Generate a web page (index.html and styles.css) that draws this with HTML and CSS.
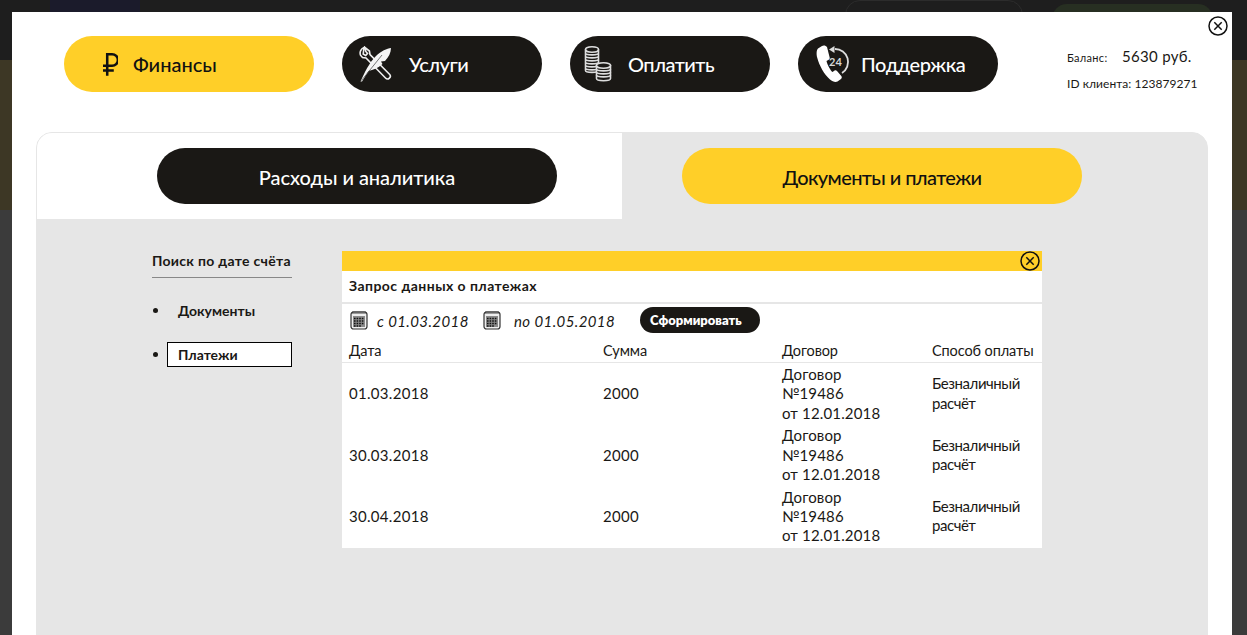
FILE: index.html
```html
<!DOCTYPE html>
<html lang="ru">
<head>
<meta charset="utf-8">
<title>Финансы</title>
<link rel="stylesheet" href="styles.css">
</head>
<body>
<div class="backdrop">
  <div class="bd-top"><span class="bd-logo"></span><span class="bd-outline"></span><span class="bd-green"></span></div>
  <div class="bd-band"></div>
  <div class="bd-rest"></div>
</div>
<main class="modal">
  <button class="modal-close close-icon" aria-label="Закрыть"><svg viewBox="0 0 20 20"><circle cx="10" cy="10" r="9"/><path d="M6.300 6.300l7.400 7.400M13.700 6.300l-7.400 7.400"/></svg></button>
  <header class="top">
    <nav class="nav">
      <a class="pill pill-active pill-wide">
        <svg class="ic ic-rub" viewBox="0 0 16 26"><path d="M4.500 25V2h5.200a6.200 6.200 0 0 1 0 12.400H0M0 19.500h11.500"/></svg>
        <span class="pill-t1">Финансы</span>
      </a>
      <a class="pill">
        <svg class="ic ic-tools" viewBox="0 0 34 36"><path class="wr" d="M5 1.500a6 6 0 0 0-3.500 7.700l2 2.300 3.500.5L26.500 32a2.700 2.700 0 0 0 4-3.800L11 8.500l-.6-3.500L6 1.500l.8 4 1.700 2-1.800 2-2.500-1.500z"/><path class="fe" d="M1.500 35.500 C6 26 10 17 17 10 C22 5 28 2.500 32 2 C32 7 29.500 11 26 15 L22 15.500 L23.500 18 C19 22 14 24 9.500 25 L3 35.500z"/><path class="fl" d="M2.500 34.500 L23 9"/></svg>
        <span class="pill-t2">Услуги</span>
      </a>
      <a class="pill">
        <svg class="ic ic-coins" viewBox="0 0 28 36"><g class="coin"><ellipse cx="8" cy="3.500" rx="6.500" ry="2.700"/><path d="M1.500 3.500v21c0 2.500 13 2.500 13 0V3.500M1.500 7c0 2.500 13 2.500 13 0M1.500 10c0 2.500 13 2.500 13 0M1.500 13c0 2.500 13 2.500 13 0M1.500 16c0 2.500 13 2.500 13 0M1.500 19c0 2.500 13 2.500 13 0M1.500 22c0 2.500 13 2.500 13 0"/></g><g class="coin"><path class="coin-top" d="M12.500 19.500v13c0 3 14 3 14 0V19.500z"/><ellipse class="coin-top" cx="19.500" cy="19.500" rx="7" ry="2.800"/><path d="M12.500 23c0 2.500 14 2.500 14 0M12.500 26c0 2.500 14 2.500 14 0M12.500 29c0 2.500 14 2.500 14 0"/></g></svg>
        <span class="pill-t3">Оплатить</span>
      </a>
      <a class="pill">
        <svg class="ic ic-phone" viewBox="0 0 34 38"><path class="ring" d="M19 4A13 13 0 0 1 26 28"/><path class="ring-tip" d="M13 4.500l5.500-3.500v7z"/><path class="ph" d="M6 1L2 3.500C.5 5 .2 9 1.300 13 3.500 21 8 29 14 34.500c2.500 2.200 5.500 3 7.500 2l3.500-2.500c1-1 1-2 .3-3l-4.300-5c-.8-.8-1.800-.8-2.700-.2l-1.800 1.300c-1.500-.5-5.500-8-6-11l2.200-1.300c.9-.6 1.200-1.500.9-2.500L11 2C10 .5 7.500 0 6 1z"/><text class="ph-num" x="13" y="21">24</text></svg>
        <span class="pill-t4">Поддержка</span>
      </a>
    </nav>
    <div class="account">
      <p class="bal"><span class="bal-l">Баланс:</span><span class="bal-v">5630 руб.</span></p>
      <p class="cid">ID клиента: <span class="cid-v">123879271</span></p>
    </div>
  </header>
  <section class="panel">
    <div class="tabs">
      <div class="tab tab-on"><a class="tab-btn tab-dark">Расходы и аналитика</a></div>
      <div class="tab tab-off"><a class="tab-btn tab-yellow">Документы и платежи</a></div>
    </div>
    <div class="body">
      <aside class="side">
        <h3 class="side-h">Поиск по дате счёта</h3>
        <ul class="side-list">
          <li class="side-item"><span class="side-lnk">Документы</span></li>
          <li class="side-item"><span class="side-lnk side-sel">Платежи</span></li>
        </ul>
      </aside>
      <article class="card">
        <div class="card-bar"><button class="card-close close-icon" aria-label="Закрыть"><svg viewBox="0 0 20 20"><circle cx="10" cy="10" r="9"/><path d="M6.300 6.300l7.400 7.400M13.700 6.300l-7.400 7.400"/></svg></button></div>
        <h2 class="card-title">Запрос данных о платежах</h2>
        <div class="filter">
          <svg class="cal" viewBox="0 0 18 20"><use href="#cal"/></svg>
          <span class="date date-a">с 01.03.2018</span>
          <svg class="cal" viewBox="0 0 18 20"><use href="#cal"/></svg>
          <span class="date date-b">по 01.05.2018</span>
          <a class="form-btn">Сформировать</a>
        </div>
        <table class="tbl">
          <colgroup><col class="c1"><col class="c2"><col class="c3"><col class="c4"></colgroup>
          <thead><tr><th>Дата</th><th>Сумма</th><th>Договор</th><th>Способ оплаты</th></tr></thead>
          <tbody>
            <tr><td>01.03.2018</td><td>2000</td><td class="td-con">Договор<br>№19486<br>от 12.01.2018</td><td class="td-pay">Безналичный<br>расчёт</td></tr>
            <tr><td>30.03.2018</td><td>2000</td><td class="td-con">Договор<br>№19486<br>от 12.01.2018</td><td class="td-pay">Безналичный<br>расчёт</td></tr>
            <tr><td>30.04.2018</td><td>2000</td><td class="td-con">Договор<br>№19486<br>от 12.01.2018</td><td class="td-pay">Безналичный<br>расчёт</td></tr>
          </tbody>
        </table>
      </article>
    </div>
  </section>
</main>
<svg class="defs" width="0" height="0"><defs><g id="cal"><rect x="1" y="2" width="16" height="17" rx="2.500" fill="#eee" stroke="#333" stroke-width="1.200"/><rect x="3" y="6" width="12" height="11" fill="#8a8a8a"/><path d="M3 1v3M5 1v3M7 1v3M9 1v3M11 1v3M13 1v3M15 1v3" stroke="#333" stroke-width=".9"/><path d="M4 8.500h10M4 11h10M4 13.500h10M4 16h7" stroke="#111" stroke-width="1.600" stroke-dasharray="1.600 1"/></g></defs></svg>
</body>
</html>
```
FILE: styles.css
```css
* { box-sizing: border-box; }
html, body { margin: 0; height: 100%; overflow: hidden; }
body { font-family: "Lato", "Open Sans", sans-serif; color: #1a1815; background: #3b3b3b; position: relative; }
p, h2, h3, ul { margin: 0; padding: 0; }
a { display: flex; }
button { border: 0; padding: 0; background: none; }

.backdrop { position: absolute; inset: 0; display: flex; flex-direction: column; }
.bd-top { height: 60px; background: #1e1e1e; position: relative; }
.bd-band { height: 150px; background: #3d3725; }
.bd-rest { flex: 1; background: #3b3b3b; }
.bd-logo { position: absolute; left: 50px; top: 0; width: 90px; height: 12px; background: #1b1b2b; }
.bd-outline { position: absolute; left: 845px; top: 0; width: 178px; height: 30px; border: 1px solid #2c2c2c; border-radius: 15px; }
.bd-green { position: absolute; left: 1052px; top: 4px; width: 161px; height: 30px; border-radius: 15px; background: #272f22; }

.modal { position: absolute; left: 12px; right: 15px; top: 12px; bottom: 0; background: #fff; overflow: hidden; padding: 24px 24px 0; }
.close-icon { display: block; width: 20px; height: 20px; }
.close-icon svg { display: block; width: 20px; height: 20px; fill: none; stroke: #111; stroke-width: 1.500; }
.modal-close { position: absolute; left: 1196px; top: 4px; }

.top { display: flex; height: 96px; padding-left: 28px; }
.nav { display: flex; gap: 28px; width: 1003px; flex: none; align-items: flex-start; }
.pill { width: 200px; height: 56px; border-radius: 28px; background: #1a1815; color: #fff; align-items: center; font-size: 20px; font-weight: 500; }
.pill-wide { width: 250px; }
.pill-active { background: #ffcf28; color: #111; }
.ic { flex: none; display: block; }
.ic-rub { width: 15px; height: 25px; margin: 0 0 0 39px; fill: none; stroke: #111; stroke-width: 2.700; }
.ic-tools { width: 34px; height: 36px; margin: 0 0 0 17px; }
.wr { fill: #1a1815; stroke: #eee; stroke-width: 1.600; }
.fe { fill: #f4f4f4; }
.fl { fill: none; stroke: #555; stroke-width: .8; }
.ic-coins { width: 28px; height: 36px; margin: 0 0 0 14px; }
.coin { fill: none; stroke: #ddd; stroke-width: 1.600; }
.coin-top { fill: #1a1815; }
.ic-phone { width: 34px; height: 38px; margin: 0 0 0 18px; }
.ph { fill: #fff; }
.ring { fill: none; stroke: #ddd; stroke-width: 1.800; }
.ring-tip { fill: #ddd; }
.ph-num { fill: #d8d8d8; font-size: 11px; font-weight: 700; }
.pill-t1 { margin-left: 15px; }
.pill-t2 { margin-left: 16px; letter-spacing: -.5px; }
.pill-t3 { margin-left: 16px; letter-spacing: -.5px; }
.pill-t4 { margin-left: 11px; letter-spacing: -.4px; }

.account { flex: none; width: 135px; padding-top: 11px; white-space: nowrap; }
.bal { display: flex; align-items: baseline; height: 20px; }
.bal-l { font-size: 11px; width: 55px; letter-spacing: .3px; }
.bal-v { font-size: 15px; letter-spacing: .3px; }
.cid { font-size: 12px; letter-spacing: .05px; margin-top: 9px; line-height: 15px; }

.panel { margin: 0; height: 640px; background: #e6e6e6; border: 1px solid #e6e6e6; border-radius: 16px 16px 0 0; overflow: hidden; width: 1172px; }
.tabs { display: flex; height: 86px; }
.tab { padding-top: 15px; }
.tab-on { width: 585px; background: #fff; padding-left: 120px; }
.tab-off { flex: 1; padding-left: 60px; }
.tab-btn { width: 400px; height: 56px; padding-top: 2px; border-radius: 28px; align-items: center; justify-content: center; font-size: 20px; font-weight: 500; }
.tab-dark { background: #1a1815; color: #fff; letter-spacing: -.05px; }
.tab-yellow { background: #ffcf28; color: #111; letter-spacing: -.6px; }

.body { display: flex; padding: 32px 0 0 115px; }
.side { width: 140px; flex: none; }
.side-h { font-size: 14px; font-weight: 700; height: 27px; line-height: 20px; border-bottom: 1px solid #888; letter-spacing: .3px; white-space: nowrap; }
.side-list { list-style: none; margin-top: 20px; }
.side-item { position: relative; height: 25px; margin-bottom: 19px; font-size: 14px; font-weight: 700; display: flex; }
.side-item::before { content: ""; position: absolute; left: 1px; top: 10px; width: 5px; height: 5px; border-radius: 50%; background: #1a1815; }
.side-lnk { margin-left: 15px; width: 125px; height: 25px; line-height: 23px; padding-left: 10px; border: 1px solid transparent; }
.side-sel { background: #fff; border-color: #000; }

.card { width: 700px; margin-left: 50px; background: #fff; height: 297px; }
.card-bar { height: 20px; background: #ffcf28; position: relative; }
.card-close { position: absolute; left: 678px; top: 0; }
.card-title { font-size: 14px; font-weight: 700; height: 33px; line-height: 30px; padding-left: 7px; border-bottom: 2px solid #e6e6e6; letter-spacing: .45px; }
.filter { height: 35px; display: flex; align-items: center; padding: 0 0 3px 8px; }
.cal { width: 18px; height: 20px; flex: none; }
.date { font-size: 15px; font-style: italic; letter-spacing: .4px; padding-top: 2px; }
.date-a { margin: 0 15px 0 9px; width: 91px; white-space: nowrap; }
.date-b { margin: 0 0 0 13px; width: 101px; white-space: nowrap; }
.form-btn { margin-left: 25px; width: 120px; height: 26px; padding-left: 10px; border-radius: 13px; background: #1a1815; color: #fff; font-size: 13px; font-weight: 800; align-items: center; }

.tbl { width: 700px; table-layout: fixed; border-collapse: collapse; font-size: 15px; letter-spacing: .3px; }
.c1 { width: 254px; }
.c2 { width: 179px; }
.c3 { width: 150px; }
.c4 { width: 117px; }
.tbl th { font-weight: 400; text-align: left; padding: 0 0 0 7px; height: 23px; border-bottom: 1px solid #e6e6e6; white-space: nowrap; font-size: 14.500px; letter-spacing: -.1px; }
.tbl td { padding: 2px 0 0 7px; line-height: 19.200px; vertical-align: middle; white-space: nowrap; }
.tbl tbody tr { height: 61.500px; }
.tbl .td-con { letter-spacing: .15px; }
.tbl .td-pay { letter-spacing: -.45px; padding-top: 1px; }
.defs { position: absolute; }
```
